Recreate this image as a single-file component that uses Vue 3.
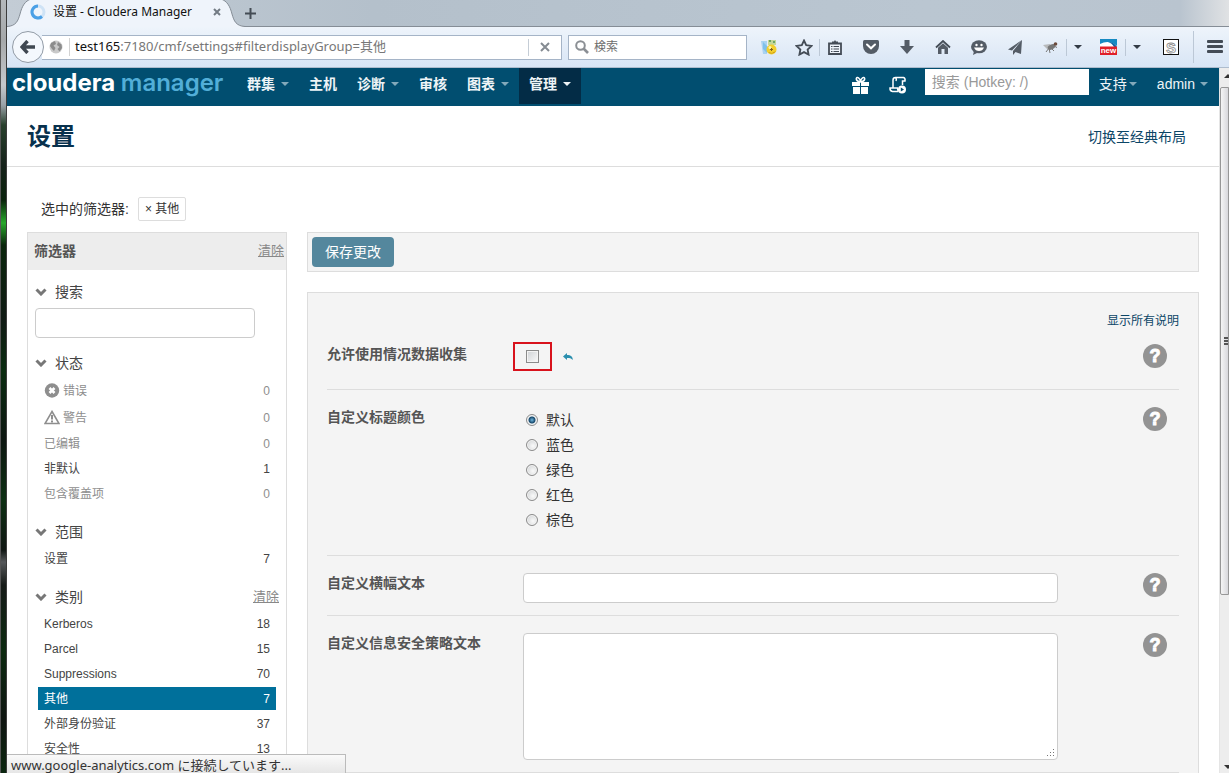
<script setup>
import { ref } from 'vue'

const url = ref('test165:7180/cmf/settings#filterdisplayGroup=其他')
const navItems = [
  { label: '群集', menu: true },
  { label: '主机' },
  { label: '诊断', menu: true },
  { label: '审核' },
  { label: '图表', menu: true },
  { label: '管理', menu: true, active: true }
]
const filterGroups = [
  {
    title: '状态',
    items: [
      { label: '错误', count: 0, icon: 'error' },
      { label: '警告', count: 0, icon: 'warning' },
      { label: '已编辑', count: 0 },
      { label: '非默认', count: 1 },
      { label: '包含覆盖项', count: 0 }
    ]
  },
  { title: '范围', items: [{ label: '设置', count: 7 }] },
  {
    title: '类别',
    clear: true,
    items: [
      { label: 'Kerberos', count: 18 },
      { label: 'Parcel', count: 15 },
      { label: 'Suppressions', count: 70 },
      { label: '其他', count: 7, active: true },
      { label: '外部身份验证', count: 37 },
      { label: '安全性', count: 13 }
    ]
  }
]
const colors = ['默认', '蓝色', '绿色', '红色', '棕色']
const color = ref('默认')
const collect = ref(false)
const banner = ref('')
const policy = ref('')
const query = ref('')
</script>

<template>
  <div class="window">
    <div class="desktop-edge"></div>
    <div class="browser">
      <header class="tabs">
        <div class="tab">
          <svg class="tab-shape" viewBox="0 0 238 27" preserveAspectRatio="none" aria-hidden="true">
            <path d="M0 26.5C9 26 11 21 13 14C15 6 18 1 24 -1H214C220 1 223 6 225 14C227 21 229 26 238 26.5V28H0Z" fill="#eff4fb" stroke="#858d96" />
          </svg>
          <svg class="spinner" viewBox="0 0 16 16" aria-hidden="true">
            <circle cx="8" cy="8" r="6" fill="none" stroke="#cfe3f6" stroke-width="3" />
            <path d="M8 2A6 6 0 1 0 12 12.5" fill="none" stroke="#4ba0e6" stroke-width="3" />
          </svg>
          <span class="tab-title">设置 - Cloudera Manager</span>
          <button class="plain" aria-label="Close tab">
            <svg width="8" height="8" viewBox="0 0 8 8"><path d="M1 1L7 7M7 1L1 7" stroke="#737b84" stroke-width="2" /></svg>
          </button>
        </div>
        <button class="plain new-tab" aria-label="New tab">
          <svg width="11" height="11" viewBox="0 0 11 11"><path d="M5.5 0V11M0 5.5H11" stroke="#444c55" stroke-width="2" /></svg>
        </button>
      </header>

      <div class="toolbar">
        <button class="back" aria-label="Back">
          <svg width="16" height="14" viewBox="0 0 16 14"><path d="M7.500 1L2 7L7.500 13M2.500 7H15" fill="none" stroke="#404852" stroke-width="3.400" /></svg>
        </button>
        <div class="url">
          <svg width="14" height="14" viewBox="0 0 14 14" aria-hidden="true">
            <circle cx="7" cy="7" r="6.500" fill="#c9c9c9" />
            <path d="M2 3L6 1L7 4L4.500 5.500L6.500 8L5 11L3 9L1 6ZM9 2L12.500 4.500L13 8L10.500 11.500L8.500 9L10.500 7L8 5Z" fill="#8c8c8c" />
          </svg>
          <label class="url-field"><span class="host">test165</span>:7180/cmf/settings#filterdisplayGroup=其他<input v-model="url" aria-label="URL" /></label>
          <button class="plain stop" aria-label="Stop">
            <svg width="10" height="10" viewBox="0 0 10 10"><path d="M1 1L9 9M9 1L1 9" stroke="#858b92" stroke-width="2" /></svg>
          </button>
        </div>
        <div class="web-search">
          <svg width="14" height="14" viewBox="0 0 14 14" aria-hidden="true"><circle cx="5.500" cy="5.500" r="4.300" fill="none" stroke="#8b8f94" stroke-width="2" /><path d="M8.500 8.500L13 13" stroke="#8b8f94" stroke-width="2.600" /></svg>
          <input placeholder="検索" aria-label="検索" />
        </div>
        <div class="tools">
          <button class="plain wide" aria-label="Add-on">
            <svg width="16" height="16" viewBox="0 0 16 16"><path d="M0 2H6V15H2Z" fill="#a9d2f1" /><path d="M2 3L7 8L6 14L2 10Z" fill="#7fc0ea" /><rect x="7" y="1" width="8" height="5" fill="#c3d79a" /><path d="M8 1H10V3H8ZM12 2H14V4H12Z" fill="#6ea566" /><circle cx="10.500" cy="10.500" r="5" fill="#f3cf2c" /><path d="M7 13A5 5 0 0 0 15 12L11 14Z" fill="#c69310" /><circle cx="9" cy="8.500" r="1.500" fill="#fff5a8" /><path d="M10.500 9V12M9 10.500H12" stroke="#806020" /></svg>
          </button>
          <button class="plain star" aria-label="Bookmark">
            <svg width="18" height="17" viewBox="0 0 18 17"><path d="M9 1.500L11.200 6.200L16.500 6.900L12.600 10.500L13.600 15.600L9 13.100L4.400 15.600L5.400 10.500L1.500 6.900L6.800 6.200Z" fill="none" stroke="#444c56" stroke-width="1.800" /></svg>
          </button>
          <button class="plain divided list" aria-label="Bookmark list">
            <svg width="14" height="15" viewBox="0 0 14 15"><path d="M1 3.500H13V14H1Z" fill="#eef3fa" stroke="#444c56" stroke-width="1.800" /><path d="M4 4V1.500H6L7 0L8 1.500H10V4Z" fill="#444c56" /><path d="M3 6.500H4.500M5.500 6.500H11M3 9H4.500M5.500 9H11M3 11.500H4.500M5.500 11.500H11" stroke="#444c56" stroke-width="1.200" /></svg>
          </button>
          <button class="plain" aria-label="Pocket">
            <svg width="16" height="14" viewBox="0 0 16 14"><path d="M1.500 0H14.500Q16 0 16 1.500V6A8 8 0 0 1 0 6V1.500Q0 0 1.500 0Z" fill="#545c66" /><path d="M4 4.500L8 8.300L12 4.500" fill="none" stroke="#fff" stroke-width="2" stroke-linecap="round" /></svg>
          </button>
          <button class="plain" aria-label="Downloads">
            <svg width="14" height="14" viewBox="0 0 14 14"><path d="M4.500 0H9.500V6H14L7 14L0 6H4.500Z" fill="#545c66" /></svg>
          </button>
          <button class="plain" aria-label="Home">
            <svg width="16" height="14" viewBox="0 0 16 14"><path d="M1 7.500L8 1L15 7.500" fill="none" stroke="#444c56" stroke-width="1.800" /><path d="M3 7.800L8 3.300L13 7.800V14H9.500V9H6.500V14H3Z" fill="#545c66" /></svg>
          </button>
          <button class="plain" aria-label="Chat">
            <svg width="16" height="15" viewBox="0 0 16 15"><ellipse cx="8" cy="6.800" rx="8" ry="6.500" fill="#545c66" /><path d="M3 11L2 15L8 12Z" fill="#545c66" /><circle cx="5.500" cy="5" r="1.200" fill="#fff" /><circle cx="10.500" cy="5" r="1.200" fill="#fff" /><path d="M3 7.500H13Q11.500 11 8 11T3 7.500Z" fill="#fff" /></svg>
          </button>
          <button class="plain" aria-label="Share">
            <svg width="15" height="15" viewBox="0 0 15 15"><path d="M14 0L0 9.500L4 10.500ZM14 0L5 11V15L7.500 12L13 14Z" fill="#545c66" /></svg>
          </button>
          <button class="plain fly" aria-label="Debugger">
            <svg width="16" height="13" viewBox="0 0 16 13"><path d="M1 4L8 3L10 7L5 8Z" fill="#b7b9bb" /><ellipse cx="9.500" cy="6" rx="4" ry="2.500" fill="#777" transform="rotate(-25 9.500 6)" /><circle cx="13.500" cy="3" r="1.800" fill="#6b4a3c" /><path d="M4 11L7 7L8 12M10 8L12 10M12 5L15 6.500" fill="none" stroke="#777" /></svg>
          </button>
          <button class="plain divided drop" aria-label="Debugger menu"><i class="caret"></i></button>
          <button class="plain news" aria-label="News">
            <svg width="17" height="16" viewBox="0 0 17 16"><rect width="17" height="16" fill="#fff" /><path d="M0 0H17V7Q9 0 0 5Z" fill="#168ac2" /><path d="M8 3Q14 3 17 8H14Q12 4 8 3Z" fill="#0c64a2" /><rect y="7.500" width="17" height="8.500" fill="#df2029" /><text x="8.500" y="14" font-family="Liberation Sans" font-size="8" font-weight="700" fill="#fff" text-anchor="middle">new</text></svg>
          </button>
          <button class="plain divided drop" aria-label="News menu"><i class="caret"></i></button>
          <button class="plain script" aria-label="Scripts">
            <svg width="16" height="16" viewBox="0 0 16 16"><rect x=".5" y=".5" width="15" height="15" fill="#fff" stroke="#111" /><text x="8" y="13.500" font-family="Liberation Sans" font-size="15" font-weight="700" fill="#fff" stroke="#888" stroke-width=".8" text-anchor="middle">S</text></svg>
          </button>
          <button class="plain divided menu" aria-label="Menu">
            <svg width="16" height="14" viewBox="0 0 16 14"><path d="M1 1.500H15M1 6.500H15M1 11.500H15" stroke="#444c56" stroke-width="2.800" stroke-linecap="round" /></svg>
          </button>
        </div>
      </div>

      <div class="viewport">
        <div class="page">
          <nav class="nav">
            <a class="logo" href="#">cloudera <span>manager</span></a>
            <a v-for="n in navItems" :key="n.label" href="#" class="nav-item" :class="{ active: n.active }">{{ n.label }}<i v-if="n.menu" class="caret"></i></a>
            <div class="nav-right">
              <button class="plain" aria-label="Gift">
                <svg width="17" height="18" viewBox="0 0 17 18"><path d="M0 6H8V10H0ZM9 6H17V10H9ZM1 11H8V18H1ZM9 11H16V18H9Z" fill="#fff" /><path d="M8.500 6C6 5.500 4 4.500 4.300 2.500C5 .5 8 1.500 8.500 6C9 1.500 12 .5 12.700 2.500C13 4.500 11 5.500 8.500 6Z" fill="none" stroke="#fff" stroke-width="1.500" /></svg>
              </button>
              <button class="plain" aria-label="Running commands">
                <svg width="18" height="18" viewBox="0 0 18 18"><path d="M4 12V4Q4 1.500 6.500 1.500H14.500Q16.500 2 16 5H13.500V9M6.500 1.500Q8 3 7 5M9.500 15.500H3.500Q.8 15 1 12H8.500Q8.500 14 9.500 15.500" fill="none" stroke="#fff" stroke-width="1.500" /><circle cx="13" cy="13.500" r="4" fill="#fff" /><path d="M11.800 11.500L15 13.500L11.800 15.500Z" fill="#014e70" /></svg>
              </button>
              <input v-model="query" class="hotkey" placeholder="搜索 (Hotkey: /)" aria-label="搜索" />
              <a href="#" class="support">支持<i class="caret"></i></a>
              <a href="#" class="user">admin<i class="caret"></i></a>
            </div>
          </nav>

          <div class="heading">
            <h1>设置</h1>
            <a href="#">切换至经典布局</a>
          </div>

          <div class="selected">
            <span>选中的筛选器:</span>
            <button class="tag">× 其他</button>
          </div>

          <div class="columns">
            <aside class="filters">
              <div class="filters-head"><strong>筛选器</strong><a href="#">清除</a></div>
              <div class="filters-body">
                <section>
                  <h2><svg width="12" height="8" viewBox="0 0 12 8"><path d="M1.500 1.500L6 6L10.500 1.500" fill="none" stroke="#777" stroke-width="3" /></svg><label for="filter-search">搜索</label></h2>
                  <input id="filter-search" class="text-input" />
                </section>
                <section v-for="g in filterGroups" :key="g.title">
                  <h2><svg width="12" height="8" viewBox="0 0 12 8"><path d="M1.500 1.500L6 6L10.500 1.500" fill="none" stroke="#777" stroke-width="3" /></svg>{{ g.title }}<a v-if="g.clear" href="#">清除</a></h2>
                  <ul>
                    <li v-for="i in g.items" :key="i.label">
                      <a href="#" :class="{ active: i.active, muted: !i.count, tall: i.icon }">
                        <svg v-if="i.icon === 'error'" width="16" height="15" viewBox="0 0 16 15"><circle cx="8" cy="7.500" r="7.200" fill="#8e8e8e" /><path d="M5.500 5L10.500 10M10.500 5L5.500 10" stroke="#fff" stroke-width="2.600" /></svg>
                        <svg v-if="i.icon === 'warning'" width="16" height="15" viewBox="0 0 16 15"><path d="M8 1.500L15 13.500H1Z" fill="none" stroke="#8e8e8e" stroke-width="1.600" /><path d="M8 5V9.500M8 10.500V12.500" stroke="#8e8e8e" stroke-width="2" /></svg>
                        <span>{{ i.label }}</span><span class="count">{{ i.count }}</span>
                      </a>
                    </li>
                  </ul>
                </section>
              </div>
            </aside>

            <main class="main">
              <div class="actions"><button class="save">保存更改</button></div>
              <form class="panel" @submit.prevent>
                <a class="show-all" href="#">显示所有说明</a>
                <div class="row">
                  <label class="name" for="collect">允许使用情况数据收集</label>
                  <div class="field check-field">
                    <span class="marked"><input id="collect" v-model="collect" type="checkbox" class="check" /></span>
                    <button class="plain undo" type="button" aria-label="重置">
                      <svg width="10" height="8" viewBox="0 0 10 8"><path d="M0 3.500L4 0V2C8 2 9.800 3.500 9.800 7C8 5.200 7 5 4 5V7Z" fill="#2b8fae" /></svg>
                    </button>
                  </div>
                  <button class="plain help" type="button" aria-label="说明">?</button>
                </div>
                <div class="row" role="radiogroup" aria-labelledby="color-name">
                  <span id="color-name" class="name">自定义标题颜色</span>
                  <div class="field radios">
                    <label v-for="c in colors" :key="c"><input v-model="color" type="radio" name="color" :value="c" />{{ c }}</label>
                  </div>
                  <button class="plain help" type="button" aria-label="说明">?</button>
                </div>
                <div class="row">
                  <label class="name" for="banner">自定义横幅文本</label>
                  <input id="banner" v-model="banner" class="text-input" />
                  <button class="plain help" type="button" aria-label="说明">?</button>
                </div>
                <div class="row">
                  <label class="name" for="policy">自定义信息安全策略文本</label>
                  <div class="area">
                    <textarea id="policy" v-model="policy" class="text-input"></textarea>
                    <svg class="grip" width="8" height="8" viewBox="0 0 8 8" aria-hidden="true"><path d="M0 6H1V7H0ZM3 6H4V7H3ZM6 6H7V7H6ZM3 3H4V4H3ZM6 3H7V4H6ZM6 0H7V1H6Z" fill="#777" /></svg>
                  </div>
                  <button class="plain help" type="button" aria-label="说明">?</button>
                </div>
              </form>
            </main>
          </div>
        </div>
        <div class="scrollbar" aria-hidden="true">
          <i class="arrow up"></i>
          <div class="thumb"><i></i><i></i><i></i></div>
          <i class="arrow down"></i>
        </div>
        <div class="status">www.google-analytics.com に接続しています...</div>
      </div>
    </div>
  </div>
</template>

<style>
body { margin: 0; }
</style>

<style scoped>
* { box-sizing: border-box; }
.window {
  display: flex;
  height: 100vh;
  overflow: hidden;
  font: 14px/20px "Liberation Sans", "Noto Sans CJK SC", sans-serif;
  color: #333;
}
.window svg { display: block; flex: none; }
input, button, textarea { font: inherit; color: inherit; }
a { color: #0b4566; text-decoration: none; }
.plain { display: flex; align-items: center; justify-content: center; padding: 0; border: 0; background: none; }
.caret { border: 4px solid transparent; border-top-color: currentColor; border-bottom: 0; }

.desktop-edge {
  flex: none;
  width: 7px;
  border-left: 1px solid #555;
  border-right: 1px solid #3c3c3c;
  background: linear-gradient(#b4b8bb 0, #a5a8aa 40px, #c6c9cc 85px, #9aa2a8 105px, #28402c 125px, #15221a 165px, #0a230c 200px, #27a82b 223px, #0a260c 245px, #101b14 320px, #0a2c10 370px, #0d1711 440px, #0d3013 500px, #101713 550px, #55585a 562px, #151a17 585px, #0c2a10 650px, #0f1611 720px, #0b260f 773px);
}
.browser { flex: 1; min-width: 0; display: flex; flex-direction: column; }

.tabs {
  flex: none;
  display: flex;
  height: 27px;
  border-bottom: 1px solid #858d96;
  background: linear-gradient(90deg, #c3ccd5, #b4c0cb 30%, #bac6d1 75%, #b9c4cf 96%, #e0e2e4);
  font: 12px/20px "Noto Sans", "Noto Sans CJK SC", sans-serif;
}
.tab { position: relative; display: flex; align-items: center; width: 238px; height: 27px; padding: 0 24px 3px 23px; gap: 7px; color: #111; }
.tab-shape { position: absolute; inset: 0; width: 100%; height: 100%; }
.spinner { position: relative; width: 16px; height: 16px; }
.tab-title { position: relative; flex: 1; white-space: nowrap; }
.tab .plain { position: relative; }
.new-tab { width: 10px; height: 26px; }

.toolbar {
  flex: none;
  display: flex;
  align-items: center;
  height: 41px;
  padding-left: 5px;
  border-bottom: 1px solid #aebccd;
  background: linear-gradient(#eef4fb, #d8e5f5);
  font: 12px/20px "Noto Sans", "Noto Sans CJK JP", sans-serif;
}
.back { display: flex; align-items: center; justify-content: center; width: 32px; height: 32px; padding: 0; border: 1px solid #929ba6; border-radius: 50%; background: #f4f8fd; z-index: 1; }
.url { flex: 1; min-width: 0; display: flex; align-items: center; height: 25px; margin-left: -2px; padding-left: 7px; border: 1px solid #a5b4c7; border-left: 0; background: #fff; }
.url-field { position: relative; flex: 1; min-width: 0; height: 18px; margin-left: 6px; padding-left: 5px; border-left: 1px solid #d3d3d3; font-size: 13px; line-height: 16px; color: #777; white-space: nowrap; }
.url-field input { position: absolute; inset: 0; width: 100%; border: 0; padding: 0; opacity: 0; }
.host { color: #111; }
.stop { width: 33px; height: 17px; border-left: 1px solid #c5cdd6; }
.web-search { display: flex; align-items: center; gap: 5px; width: 179px; height: 25px; margin: 0 3px 0 6px; padding-left: 6px; border: 1px solid #a5b4c7; background: #fff; }
.web-search input { flex: 1; min-width: 0; border: 0; padding: 0; background: none; outline: 0; }
.web-search input::placeholder { color: #6d6d6d; }
.tools { display: flex; align-items: center; width: 479px; }
.tools .plain { flex: none; width: 36px; height: 17px; color: #333b45; }
.tools .wide { width: 38px; }
.tools .star { width: 31px; }
.tools .list { width: 34px; padding-right: 3px; }
.tools .fly { width: 33px; }
.tools .drop { width: 23px; }
.tools .news { padding-left: 3px; }
.tools .script { width: 45px; }
.tools .divided { border-left: 1px solid #bcc8d6; }
.tools .menu { height: 32px; padding-left: 7px; }

.viewport { position: relative; flex: 1; min-height: 0; display: flex; }
.page { flex: 1; min-width: 0; overflow: hidden; background: #fff; }
.nav { display: flex; height: 38px; background: #014e70; }
.nav a { color: #eef4f7; }
.nav .logo { width: 230px; padding-left: 5px; font: 700 24px/30px Inter, "Liberation Sans", sans-serif; color: #fff; white-space: nowrap; }
.logo span { color: #52aed8; font-weight: 600; }
.nav-item { display: flex; align-items: center; gap: 6px; height: 36px; padding: 0 10px 4px; font-weight: 700; }
.nav .caret { opacity: .55; }
.nav .active { background: #032c46; }
.nav .active .caret { opacity: 1; }
.nav-right { display: flex; align-items: center; height: 36px; margin-left: auto; padding: 0 11px 2px 0; }
.nav-right .plain { margin-right: 20px; }
.nav-right .plain + .plain { margin-right: 18px; }
.hotkey { align-self: flex-start; width: 164px; height: 26px; padding: 0 6px; margin: 1px 10px 0 0; border: 1px solid #fff; background: #fff; color: #555; }
.hotkey::placeholder { color: #999; }
.support, .user { display: flex; align-items: center; gap: 2px; padding-bottom: 2px; white-space: nowrap; }
.user { gap: 5px; margin-left: 20px; }

.heading { display: flex; align-items: center; justify-content: space-between; height: 61px; padding: 2px 33px 0 20px; border-bottom: 1px solid #ddd; }
h1 { margin: 0; font-size: 24px; line-height: 30px; color: #08314d; }
.selected { display: flex; align-items: center; gap: 9px; padding: 30px 20px 11px 34px; }
.tag { height: 24px; padding: 0 6px; border: 1px solid #ddd; border-radius: 2px; background: #fff; font-size: 12px; line-height: 20px; }
.columns { display: flex; align-items: flex-start; gap: 20px; padding: 0 20px; }

.filters { flex: none; width: 260px; border: 1px solid #ddd; }
.filters-head { display: flex; align-items: center; justify-content: space-between; height: 37px; padding: 0 2px 1px 6px; background: #ededed; color: #555; }
.filters a { font-size: 13px; color: #888; }
.filters-head a, h2 a { text-decoration: underline; }
.filters-body { padding: 12px 7px 20px; }
section { margin-bottom: 17px; }
section:first-child { margin-bottom: 15px; }
h2 { display: flex; align-items: center; gap: 8px; margin: 0 0 5px; font-size: 14px; font-weight: 400; line-height: 20px; color: #444; }
h2 a { margin-left: auto; }
.text-input { display: block; width: 100%; height: 30px; padding: 4px 6px; border: 1px solid #ccc; border-radius: 4px; background: #fff; }
section .text-input { width: 220px; margin-top: 6px; }
ul { display: flex; flex-direction: column; gap: 2px; margin: 0; padding: 0 3px; list-style: none; }
li a { display: flex; align-items: center; gap: 3px; height: 23px; padding: 0 6px; }
.filters li a { font-size: 12px; color: #444; }
.filters li a.muted { color: #8e8e8e; }
.filters li a.active { background: #00709b; color: #fff; }
li a.tall { height: 25px; }
.count { margin-left: auto; }

.main { flex: 1; min-width: 0; }
.actions { padding: 4px; border: 1px solid #ddd; background: #f4f4f4; }
.save { display: block; width: 82px; height: 30px; padding: 0; border: 0; border-radius: 4px; background: #54879d; color: #fff; }
.panel { margin-top: 20px; padding: 22px 19px; border: 1px solid #ddd; background: #f4f4f4; }
.show-all { display: block; font-size: 12px; line-height: 12px; text-align: right; }
.row { display: grid; grid-template-columns: 196px 1fr 24px; align-items: start; padding: 17px 12px 12px 0; border-bottom: 1px solid #ddd; }
.name { font-weight: 700; color: #555; }
.row > :nth-child(2) { width: auto; margin-right: 85px; }
.help { width: 24px; height: 24px; border-radius: 50%; background: #939393; color: #fff; font: 700 18px/24px "Liberation Sans", sans-serif; -webkit-text-stroke: 1px #fff; }
.check-field { display: flex; align-items: center; height: 33px; padding: 0 0 8px 3px; }
.marked { position: relative; display: flex; }
.marked::after { content: ""; position: absolute; inset: -8px -13px; border: 2px solid #d8121c; pointer-events: none; }
.check { appearance: none; width: 13px; height: 13px; margin: 0; border: 1px solid #8b8b8b; background: linear-gradient(135deg, #cfd2d5, #fafafa); box-shadow: inset 0 0 0 1px #f4f4f4; }
.undo { margin-left: 24px; }
.radios { padding: 0 0 11px 3px; }
.radios label { display: flex; align-items: center; gap: 8px; height: 25px; }
.radios input { appearance: none; width: 12px; height: 12px; margin: 0; border: 1px solid #8b8b8b; border-radius: 50%; background: radial-gradient(circle at 60% 60%, #fafafa, #c9ccce); box-shadow: inset 0 0 0 1px #f4f4f4; }
.radios input:checked { background: radial-gradient(circle, #6fb6de 0, #16486b 3px, #e4eaee 4px); }
.area { position: relative; }
textarea.text-input { height: 127px; resize: none; }
.grip { position: absolute; right: 3px; bottom: 3px; }

.scrollbar { flex: none; display: flex; flex-direction: column; width: 10px; border-left: 1px solid #e5e5e5; background: #ededed; overflow: hidden; }
.arrow { width: 0; margin-left: 4px; border: 4px solid transparent; }
.up { margin-top: 2px; border-bottom-color: #333; }
.down { margin-top: auto; border-top-color: #333; }
.thumb { display: flex; flex-direction: column; justify-content: center; gap: 1px; height: 72%; margin-top: 9px; padding-left: 3px; border: 1px solid #979797; border-radius: 2px 0 0 2px; background: linear-gradient(90deg, #f5f5f5, #d8d8dc); }
.thumb i { height: 2px; background: #555; }
.status { position: absolute; left: 0; bottom: 0; width: 339px; height: 19px; padding-left: 4px; border: 1px solid #bbb; border-left: 0; border-bottom: 0; background: linear-gradient(#fafafa, #e6e6e6); font: 13px/20px "Noto Sans", "Noto Sans CJK JP", sans-serif; white-space: nowrap; }
</style>
